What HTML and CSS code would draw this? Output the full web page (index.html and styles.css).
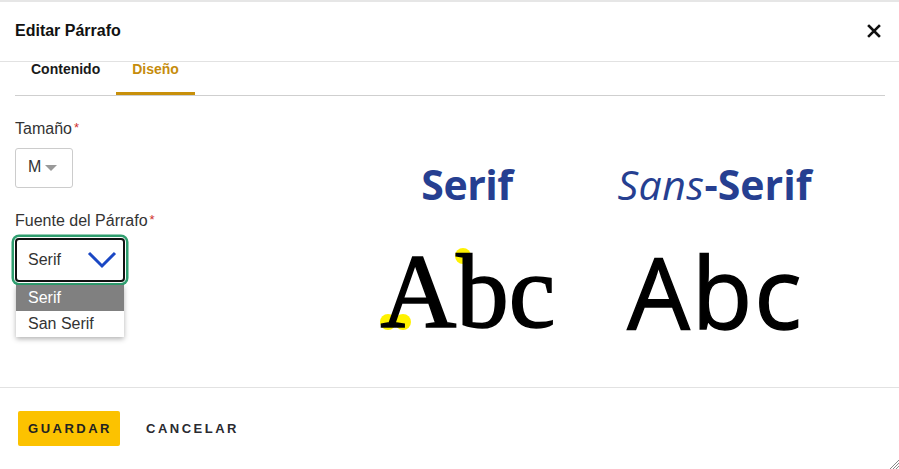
FILE: index.html
```html
<!DOCTYPE html>
<html lang="es">
<head>
<meta charset="utf-8">
<title>Editar Párrafo</title>
<link rel="stylesheet" href="styles.css">
</head>
<body>
<div class="dialog">
  <header class="header">
    <h1 class="title">Editar Párrafo</h1>
    <button class="close" aria-label="Cerrar">
      <svg width="14" height="14" viewBox="0 0 14 14"><path d="M2 2 L12 12 M12 2 L2 12" stroke="#111" stroke-width="2.6" stroke-linecap="square"/></svg>
    </button>
  </header>
  <main class="body">
    <nav class="tabs">
      <div class="tab">Contenido</div>
      <div class="tab active">Diseño</div>
    </nav>
    <div class="content">
      <div class="form">
        <label class="label">Tamaño<span class="req">*</span></label>
        <div class="select-sm">
          <span>M</span>
          <span class="caret"></span>
        </div>
        <label class="label label-2">Fuente del Párrafo<span class="req">*</span></label>
        <div class="select-focus">
          <span>Serif</span>
          <svg width="30" height="18" viewBox="0 0 30 18"><path d="M2 2 L15 15 L28 2" fill="none" stroke="#1a47c4" stroke-width="3"/></svg>
        </div>
        <ul class="options">
          <li class="opt selected">Serif</li>
          <li class="opt">San Serif</li>
        </ul>
      </div>
      <div class="illustration">
        <div class="col col-serif">
          <div class="heading">Serif</div>
          <div class="abc abc-serif">Abc
            <span class="dot dot-b"></span>
            <span class="dot dot-a1"></span>
            <span class="dot dot-a2"></span>
          </div>
        </div>
        <div class="col col-sans">
          <div class="heading"><span class="ital">Sans</span>-Serif</div>
          <div class="abc abc-sans">Abc</div>
        </div>
      </div>
    </div>
  </main>
  <footer class="footer">
    <button class="btn btn-primary">GUARDAR</button>
    <button class="btn btn-text">CANCELAR</button>
    <svg class="resize" width="10" height="10" viewBox="0 0 10 10"><path d="M1 10 L10 1 M4 10 L10 4 M7 10 L10 7" stroke="#888" stroke-width="1"/></svg>
  </footer>
</div>
</body>
</html>
```
FILE: styles.css
```css
* { box-sizing: border-box; }
html, body { margin: 0; padding: 0; }
body {
  font-family: "Liberation Sans", Arial, sans-serif;
  color: #222;
  background: #fff;
}
.dialog {
  height: 469px;
  display: flex;
  flex-direction: column;
  border-top: 2px solid #e6e6e6;
  position: relative;
}
.header {
  height: 60px;
  padding: 0 15px;
  display: flex;
  align-items: center;
  justify-content: space-between;
  border-bottom: 1px solid #e2e2e2;
  flex-shrink: 0;
}
.title {
  margin: 0;
  font-size: 16px;
  font-weight: bold;
  color: #111;
  margin-top: -2px;
}
.close {
  border: 0;
  background: none;
  padding: 0;
  width: 14px;
  height: 14px;
  margin-right: 3px;
  margin-top: -2px;
  display: flex;
}
.body {
  flex: 1;
  padding: 0 14px 0 15px;
}
.tabs {
  display: flex;
  height: 34px;
  border-bottom: 1px solid #cfcfcf;
}
.tab {
  padding: 0 16px;
  font-size: 14px;
  font-weight: bold;
  color: #1a1a1a;
  line-height: 16px;
  border-bottom: 3px solid transparent;
  margin-bottom: -1px;
  position: relative;
  top: -1px;
}
.tab.active {
  color: #c68c0c;
  border-bottom-color: #c8900a;
}
.content {
  display: flex;
}
.form {
  width: 360px;
  flex-shrink: 0;
  display: flex;
  flex-direction: column;
  align-items: flex-start;
}
.label {
  font-size: 16px;
  line-height: 20px;
  color: #333;
  margin-top: 22px;
}
.label-2 { margin-top: 22px; }
.req { color: #d0312d; font-size: 13px; margin-left: 2px; vertical-align: 2px; }
.select-sm {
  margin-top: 9px;
  width: 58px;
  height: 40px;
  border: 1px solid #ccc;
  border-radius: 3px;
  display: flex;
  align-items: center;
  padding-left: 12px;
  padding-bottom: 2px;
  font-size: 16px;
  color: #333;
}
.caret {
  width: 0; height: 0;
  border-left: 6px solid transparent;
  border-right: 6px solid transparent;
  border-top: 6px solid #999;
  margin-left: 4px;
  margin-top: 1px;
}
.select-focus {
  margin-top: 7px;
  width: 110px;
  height: 44px;
  border: 2px solid #111;
  border-radius: 4px;
  box-shadow: 0 0 0 1px #fff, 0 0 0 3.5px #2f9e6f;
  display: flex;
  align-items: center;
  justify-content: space-between;
  padding: 0 6px 0 11px;
  font-size: 16px;
  color: #333;
}
.options {
  list-style: none;
  margin: 3px 0 0 1px;
  padding: 0;
  width: 108px;
  box-shadow: 0 2px 5px rgba(0,0,0,0.3);
  background: #fff;
}
.opt {
  height: 26px;
  line-height: 26px;
  padding-left: 12px;
  font-size: 16px;
  color: #333;
}
.opt.selected {
  background: #808080;
  color: #fff;
}
.illustration {
  display: flex;
  margin-top: 67px;
  gap: 53px;
}
.col { text-align: center; }
.col-serif { width: 184px; }
.col-sans { width: 205px; }
.heading {
  font-family: "Open Sans", sans-serif;
  font-weight: 700;
  font-size: 41px;
  line-height: 42px;
  height: 42px;
  color: #263f91;
  white-space: nowrap;
}
.col-serif .heading { letter-spacing: -0.5px; }
.ital { font-style: italic; font-weight: 500; letter-spacing: 0.5px; }
.abc {
  color: #000;
  line-height: 1;
  white-space: nowrap;
}
.abc-serif {
  font-family: "Liberation Serif", "Times New Roman", serif;
  font-size: 105px;
  position: relative;
  margin-top: 34px;
  -webkit-text-stroke: 1.6px #000;
  padding-left: 2px;
}
.abc-sans {
  font-family: "Open Sans", sans-serif;
  font-size: 99px;
  margin-top: 36px;
  letter-spacing: 2px;
  padding-left: 2px;
  -webkit-text-stroke: 1.4px #000;
}
.dot {
  position: absolute;
  width: 16px;
  height: 16px;
  border-radius: 50%;
  background: #fff200;
  z-index: -1;
}
.dot-b { left: 80px; top: 9px; }
.dot-a1 { left: 5px; top: 75px; }
.dot-a2 { left: 20px; top: 75px; }
.footer {
  height: 82px;
  flex-shrink: 0;
  border-top: 1px solid #e2e2e2;
  padding: 23px 18px 0;
  display: flex;
  align-items: flex-start;
  position: relative;
}
.btn {
  height: 35px;
  border: 0;
  font-family: "Liberation Sans", Arial, sans-serif;
  font-size: 13px;
  font-weight: bold;
  letter-spacing: 2.5px;
  color: #222;
  cursor: pointer;
}
.btn-primary {
  background: #fcc200;
  border-radius: 2px;
  padding: 0 8px 0 10px;
  width: 102px;
}
.btn-text {
  background: none;
  margin-left: 16px;
  padding: 0 10px;
  color: #2a2a30;
}
.resize {
  position: absolute;
  right: 0;
  bottom: 0;
}
```
